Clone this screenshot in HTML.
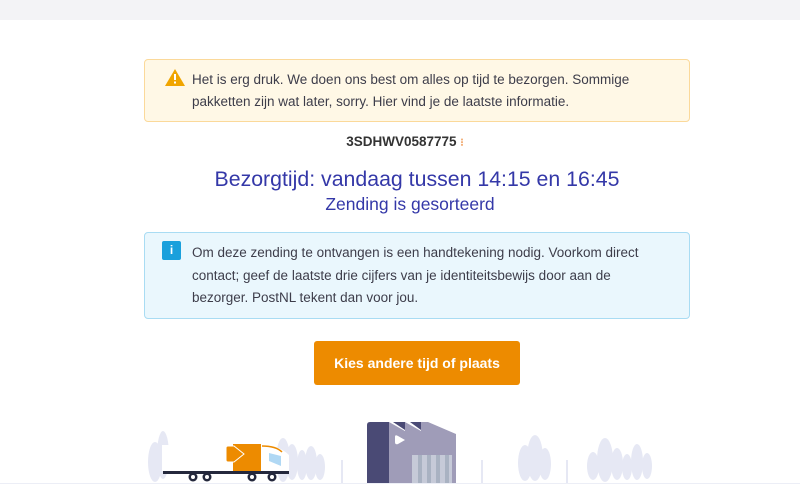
<!DOCTYPE html>
<html><head><meta charset="utf-8"><style>
*{margin:0;padding:0;box-sizing:border-box}
body{width:800px;height:496px;background:#fff;font-family:"Liberation Sans",sans-serif;position:relative;overflow:hidden;color:#3d3d4a}
.top{position:absolute;left:0;top:0;width:800px;height:20px;background:#f3f3f6}
.box{position:absolute;left:144px;width:546px;border-radius:4px;font-size:13.5px;line-height:22px;padding:9px 10px 9px 47px}
.warn{top:59px;height:63px;background:#fff8e6;border:1px solid #fbd99a}
.info{top:232px;height:87px;background:#eaf7fd;border:1px solid #a9dcf3;padding:9px 24px 9px 47px;line-height:22.5px}
.code{position:absolute;top:134px;left:0;width:810px;text-align:center;font-weight:bold;font-size:13.5px;color:#333}
.h{position:absolute;left:0;text-align:center;color:#3438a8}
.btn{position:absolute;left:314px;top:341px;width:206px;height:44px;background:#ed8b00;border-radius:3px;color:#fff;font-weight:bold;font-size:14px;text-align:center;line-height:44px}
</style></head><body>
<div class="top"></div>
<div class="box warn">
<svg style="position:absolute;left:20px;top:9px" width="20" height="17" viewBox="0 0 20 17"><path d="M10 0L20 17H0Z" fill="#f0a500"/><rect x="9" y="5" width="2" height="6" fill="#fff"/><rect x="9" y="12.5" width="2" height="2" fill="#fff"/></svg>
Het is erg druk. We doen ons best om alles op tijd te bezorgen. Sommige pakketten zijn wat later, sorry. Hier vind je de laatste informatie.</div>
<div class="code">3SDHWV0587775 <span style="color:#f0a060;font-size:11px">⁝</span></div>
<div class="h" style="top:167px;font-size:21.3px;width:834px">Bezorgtijd: vandaag tussen 14:15 en 16:45</div>
<div class="h" style="top:194px;font-size:17.5px;width:820px">Zending is gesorteerd</div>
<div class="box info">
<div style="position:absolute;left:17px;top:8px;width:19px;height:19px;background:#1aa0dc;border-radius:2px;color:#fff;font-weight:bold;font-size:12px;line-height:19px;text-align:center">i</div>
Om deze zending te ontvangen is een handtekening nodig. Voorkom direct contact; geef de laatste drie cijfers van je identiteitsbewijs door aan de bezorger. PostNL tekent dan voor jou.</div>
<div class="btn">Kies andere tijd of plaats</div>
<svg style="position:absolute;left:0;top:400px" width="800" height="96" viewBox="0 400 800 96">
<g fill="#e6e8f4">
<ellipse cx="155" cy="462" rx="7" ry="20"/><ellipse cx="163" cy="455" rx="6" ry="24"/>
<ellipse cx="283" cy="460" rx="7" ry="22"/><ellipse cx="292" cy="462" rx="6" ry="18"/><ellipse cx="302" cy="465" rx="5" ry="15"/><ellipse cx="311" cy="463" rx="6" ry="17"/><ellipse cx="320" cy="467" rx="5" ry="13"/>
<ellipse cx="525" cy="463" rx="7" ry="18"/><ellipse cx="535" cy="458" rx="8" ry="23"/><ellipse cx="545" cy="464" rx="6" ry="16"/>
<ellipse cx="593" cy="466" rx="6" ry="14"/><ellipse cx="605" cy="460" rx="8" ry="22"/><ellipse cx="617" cy="464" rx="6" ry="16"/><ellipse cx="627" cy="467" rx="5" ry="13"/><ellipse cx="637" cy="462" rx="6" ry="18"/><ellipse cx="647" cy="466" rx="5" ry="13"/>
<rect x="341" y="460" width="2" height="23"/><rect x="481" y="460" width="2" height="23"/><rect x="566" y="460" width="2" height="23"/>
</g>
<rect x="0" y="483" width="800" height="1" fill="#eceef6"/>
<path d="M367 425q0-3 3-3h19v61h-22z" fill="#4a4a75"/>
<path d="M389 422l16 9v-9l16 9v-9h7l28 12v49h-67z" fill="#9f9cb8"/>
<path d="M393 422l12 8v-8zM410 422l11 8v-8z" fill="#4a4a75"/>
<rect x="412" y="455" width="40" height="28" fill="#c6cad8"/>
<g fill="#a9b2c2"><rect x="418" y="455" width="4" height="28"/><rect x="427" y="455" width="4" height="28"/><rect x="436" y="455" width="4" height="28"/><rect x="445" y="455" width="4" height="28"/></g>
<path d="M395 437q0-3 3-1l7 4-7 4q-3 1-3-2z" fill="#fff"/>
<rect x="162" y="445" width="72" height="26" fill="#fff"/>
<rect x="233" y="444" width="28" height="27" fill="#ed8b00"/>
<path d="M226 448q0-2 2-2h6l10 8-10 8h-6q-2 0-2-2z" fill="#ed8b00" stroke="#fff" stroke-width="1"/>
<path d="M261 445q18 0 28 10v19h-28z" fill="#fff"/>
<path d="M269 453l12 3v10l-12-5z" fill="#b0d8f4"/>
<path d="M262 446q14 0 20 6" stroke="#ed8b00" stroke-width="1.5" fill="none"/>
<rect x="163" y="471" width="126" height="3" fill="#24283c"/>
<g fill="#24283c"><circle cx="193" cy="477" r="4.5"/><circle cx="207" cy="477" r="4.5"/><circle cx="252" cy="477" r="4.5"/><circle cx="272" cy="477" r="4.5"/></g>
<g fill="#fff"><circle cx="193" cy="477" r="2"/><circle cx="207" cy="477" r="2"/><circle cx="252" cy="477" r="2"/><circle cx="272" cy="477" r="2"/></g>
</svg>
</body></html>
